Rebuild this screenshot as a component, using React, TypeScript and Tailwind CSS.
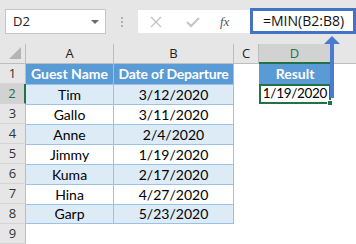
import React from "react";

const guests = [
  ["Tim", "3/12/2020"],
  ["Gallo", "3/11/2020"],
  ["Anne", "2/4/2020"],
  ["Jimmy", "1/19/2020"],
  ["Kuma", "2/17/2020"],
  ["Hina", "4/27/2020"],
  ["Garp", "5/23/2020"],
];

const cols = ["A", "B", "C", "D"];

export default function App() {
  return (
    <div className="relative h-[244px] w-[356px] overflow-hidden bg-white font-['Lato',sans-serif] text-[14px] leading-none text-black">
      {/* FORMULA BAR */}
      <div className="flex h-[44px] items-start bg-[#e6e6e6] pl-[5px] pt-[9px]">
        <div className="flex h-[25px] w-[101px] items-center justify-between border border-[#c6c6c6] bg-white pl-[7px] pr-[6px] font-['Open_Sans',sans-serif] text-[13px] text-[#222]">
          <span>D2</span>
          <span className="h-0 w-0 border-x-[4px] border-t-[4px] border-x-transparent border-t-[#6a6a6a]" />
        </div>
        <div className="flex h-[25px] w-[32px] flex-col items-center justify-center gap-[2px]">
          <span className="h-[2px] w-[2px] bg-[#b0b0b0]" />
          <span className="h-[2px] w-[2px] bg-[#b0b0b0]" />
          <span className="h-[2px] w-[2px] bg-[#b0b0b0]" />
        </div>
        <div className="mt-[1px] flex h-[23px] w-[112px] items-center bg-white">
          <svg width="12" height="12" viewBox="0 0 12 12" className="ml-[12px]">
            <path d="M1 1 L11 11 M11 1 L1 11" stroke="#c4c4c4" strokeWidth="1.4" fill="none" />
          </svg>
          <svg width="14" height="12" viewBox="0 0 14 12" className="ml-[24px]">
            <path d="M1 6 L5 10 L13 2" stroke="#c4c4c4" strokeWidth="2" fill="none" />
          </svg>
          <span className="ml-[20px] font-['Liberation_Serif',serif] text-[13px] italic text-[#555]">fx</span>
        </div>
        <div className="-mt-[1px] flex h-[26px] flex-1 items-center border-[3px] border-[#4472c4] bg-white pl-[10px] font-['Open_Sans',sans-serif] text-[14px] text-[#111]">
          =MIN(B2:B8)
        </div>
      </div>

      {/* SHEET GRID */}
      <div className="grid grid-cols-[26px_88px_120px_25px_72px_1fr] auto-rows-[20px]">
        {/* column headers */}
        <div className="relative border-b border-r border-[#bdbdbd] bg-[#e6e6e6]">
          <svg width="14" height="14" viewBox="0 0 14 14" className="absolute bottom-[3px] right-[3px]">
            <path d="M13 1 L13 13 L1 13 Z" fill="#b4b4b4" />
          </svg>
        </div>
        {cols.map((c) => (
          <div
            key={c}
            className={
              c === "D"
                ? "flex items-center justify-center border-b-2 border-r border-b-[#217346] border-r-[#bdbdbd] bg-[#d2d2d2] font-['Open_Sans',sans-serif] text-[13px] text-[#217346]"
                : "flex items-center justify-center border-b border-r border-[#bdbdbd] bg-[#e6e6e6] font-['Open_Sans',sans-serif] text-[13px] text-[#222]"
            }
          >
            {c}
          </div>
        ))}
        <div className="border-b border-[#bdbdbd] bg-[#e6e6e6]" />

        {/* row 1 */}
        <RowHead n={1} />
        <div className="flex items-center justify-center border-r border-[#9bc2e6] bg-[#5b9bd5] font-bold text-white">
          Guest Name
        </div>
        <div className="flex items-center justify-center border-r border-[#9bc2e6] bg-[#5b9bd5] font-bold tracking-[-0.2px] text-white">
          Date of Departure
        </div>
        <div />
        <div className="flex items-center justify-center bg-[#5b9bd5] font-bold text-white">Result</div>
        <div />

        {/* rows 2-8 */}
        {guests.map(([name, date], i) => {
          const band = i % 2 === 0 ? "bg-[#ddebf7]" : "bg-white";
          return (
            <React.Fragment key={name}>
              <RowHead n={i + 2} active={i === 0} />
              <div className={`flex items-center justify-center border-r border-t border-[#9bc2e6] ${band} ${i === 6 ? "border-b" : ""}`}>
                {name}
              </div>
              <div className={`flex items-center justify-center border-r border-t border-[#9bc2e6] ${band} ${i === 6 ? "border-b" : ""}`}>
                {date}
              </div>
              <div />
              {i === 0 ? (
                <div className="relative flex items-center justify-center border-2 border-[#217346] text-[13.5px] tracking-[-0.3px]">
                  1/19/2020
                  <span className="absolute -bottom-[4px] -right-[4px] h-[6px] w-[6px] border border-white bg-[#217346]" />
                </div>
              ) : (
                <div />
              )}
              <div />
            </React.Fragment>
          );
        })}

        {/* row 9 */}
        <RowHead n={9} />
        <div />
        <div />
        <div />
        <div />
        <div />
      </div>

      {/* ANNOTATION ARROW */}
      <svg width="20" height="66" viewBox="0 0 20 66" className="absolute left-[322px] top-[35px]">
        <path d="M10 1 L18 9 L12 9 L12 63 L8 63 L8 9 L2 9 Z" fill="#4a7bd0" />
      </svg>
    </div>
  );
}

function RowHead({ n, active = false }: { n: number; active?: boolean }) {
  return (
    <div
      className={
        active
          ? "flex items-center justify-center border-b border-r-2 border-b-[#d4d4d4] border-r-[#217346] bg-[#d2d2d2] font-['Open_Sans',sans-serif] text-[13px] text-[#217346]"
          : "flex items-center justify-center border-b border-r border-b-[#d4d4d4] border-r-[#bdbdbd] bg-[#e6e6e6] font-['Open_Sans',sans-serif] text-[13px] text-[#333]"
      }
    >
      {n}
    </div>
  );
}
